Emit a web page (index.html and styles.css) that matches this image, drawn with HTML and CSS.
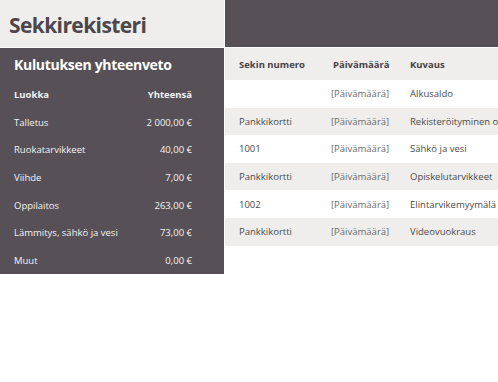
FILE: index.html
```html
<!DOCTYPE html>
<html lang="fi">
<head>
<meta charset="utf-8">
<title>Sekkirekisteri</title>
<link rel="stylesheet" href="styles.css">
</head>
<body>
<div class="sheet">
  <div class="title-cell"><h1 class="title">Sekkirekisteri</h1></div>
  <div class="top-band"></div>
  <div class="summary">
    <h2 class="summary-title">Kulutuksen yhteenveto</h2>
    <div class="sum-row sum-head"><span>Luokka</span><span>Yhteensä</span></div>
    <div class="sum-row"><span>Talletus</span><span>2 000,00 €</span></div>
    <div class="sum-row"><span>Ruokatarvikkeet</span><span>40,00 €</span></div>
    <div class="sum-row"><span>Viihde</span><span>7,00 €</span></div>
    <div class="sum-row"><span>Oppilaitos</span><span>263,00 €</span></div>
    <div class="sum-row"><span>Lämmitys, sähkö ja vesi</span><span>73,00 €</span></div>
    <div class="sum-row"><span>Muut</span><span>0,00 €</span></div>
  </div>
  <div class="register">
    <div class="reg-row reg-head"><span class="c1">Sekin numero</span><span class="c2">Päivämäärä</span><span class="c3">Kuvaus</span></div>
    <div class="reg-row"><span class="c1"></span><span class="c2">[Päivämäärä]</span><span class="c3">Alkusaldo</span></div>
    <div class="reg-row alt"><span class="c1">Pankkikortti</span><span class="c2">[Päivämäärä]</span><span class="c3">Rekisteröityminen oppilaitokseen</span></div>
    <div class="reg-row"><span class="c1">1001</span><span class="c2">[Päivämäärä]</span><span class="c3">Sähkö ja vesi</span></div>
    <div class="reg-row alt"><span class="c1">Pankkikortti</span><span class="c2">[Päivämäärä]</span><span class="c3">Opiskelutarvikkeet</span></div>
    <div class="reg-row"><span class="c1">1002</span><span class="c2">[Päivämäärä]</span><span class="c3">Elintarvikemyymälä</span></div>
    <div class="reg-row alt"><span class="c1">Pankkikortti</span><span class="c2">[Päivämäärä]</span><span class="c3">Videovuokraus</span></div>
  </div>
</div>
</body>
</html>
```

FILE: styles.css
```css
html, body {
  margin: 0;
  padding: 0;
  background: #ffffff;
  font-family: "Open Sans", "Noto Sans", sans-serif;
  overflow: hidden;
}

.sheet {
  display: grid;
  grid-template-columns: 224px 1fr;
  grid-template-rows: 47px auto;
  column-gap: 1px;
  row-gap: 1px;
  width: 498px;
}

.title-cell {
  background: #efeeec;
  display: flex;
  align-items: center;
  padding-left: 9px;
  padding-top: 3px;
}

.title {
  margin: 0;
  font-size: 21px;
  font-weight: 700;
  color: #4d474c;
  letter-spacing: -0.6px;
}

.top-band {
  background: #575157;
}

.summary {
  background: #575157;
  color: #ffffff;
  padding: 0 32px 0 14px;
  height: 226px;
  box-sizing: border-box;
}

.summary-title {
  margin: 0;
  height: 33px;
  display: flex;
  align-items: center;
  font-size: 14px;
  font-weight: 700;
  letter-spacing: -0.3px;
}

.sum-row {
  display: flex;
  justify-content: space-between;
  align-items: center;
  height: 27.6px;
  font-size: 9.5px;
  color: #f4f2f4;
}

.sum-head {
  font-weight: 700;
}

.register {
  overflow: hidden;
  white-space: nowrap;
  font-size: 9.5px;
  color: #4a4a4a;
}

.reg-row {
  display: flex;
  align-items: center;
  height: 27.6px;
}

.reg-head {
  height: 32px;
  background: #efeeec;
  font-weight: 700;
  color: #454045;
}

.alt {
  background: #efeeec;
}

.c1 {
  width: 92px;
  padding-left: 14px;
  flex: none;
}

.c2 {
  width: 79px;
  flex: none;
  color: #6b6b6b;
}

.reg-head .c2 {
  color: #454045;
  padding-left: 2px;
  width: 77px;
}

.c3 {
  flex: none;
}
```
